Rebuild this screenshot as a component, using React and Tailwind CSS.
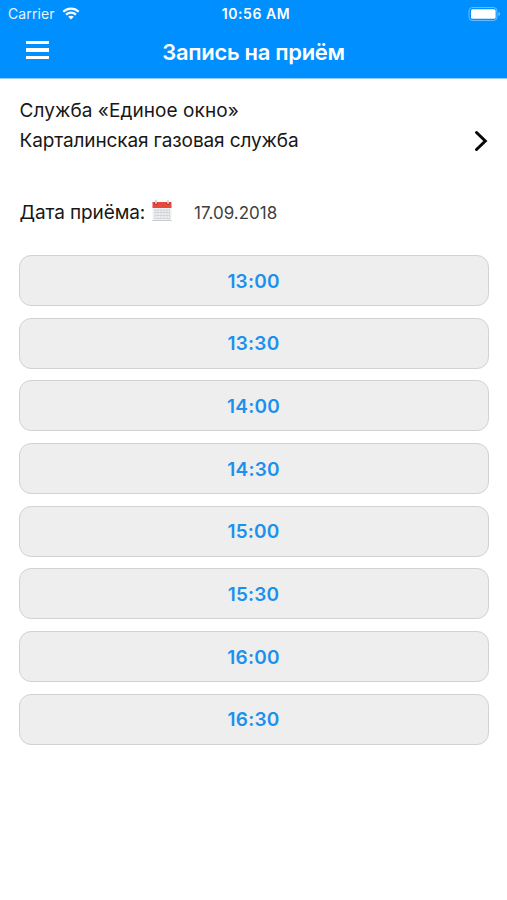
const slots = ["13:00", "13:30", "14:00", "14:30", "15:00", "15:30", "16:00", "16:30"];

function StatusBar() {
  return (
    <div className="flex h-[28px] items-center justify-between pl-[8px] pr-[6px] text-[14px] leading-none">
      <div className="flex w-[100px] items-center gap-[7px]">
        <span className="tracking-[0.1px] opacity-90">Carrier</span>
        <svg className="mb-[1px] h-[13px] w-[18px]" viewBox="0 0 18 13" fill="none" stroke="white" strokeWidth="2.2">
          <path d="M1.3 4.7C5.6.6 12.4.6 16.7 4.7" />
          <path d="M4.1 7.6c2.8-2.6 7-2.6 9.8 0" />
          <path d="M6.2 9.7c1.6-1.4 4-1.4 5.6 0L9 12.5Z" fill="white" stroke="none" />
        </svg>
      </div>
      <span className="pl-[3px] font-semibold tracking-[0.55px]">10:56 AM</span>
      <div className="flex w-[100px] justify-end">
        <svg className="mb-[1px] h-[14px] w-[33px]" viewBox="0 0 33 14">
          <rect x="1" y="0.5" width="28" height="13" rx="3.5" fill="none" stroke="white" strokeOpacity="0.4" />
          <rect x="3" y="2.2" width="24.6" height="9.6" rx="1.5" fill="white" />
          <path d="M30.5 5c2 .7 2 3.300 0 4Z" fill="white" fillOpacity="0.5" />
        </svg>
      </div>
    </div>
  );
}

function Calendar() {
  return (
    <svg className="mb-[6px] ml-[7px] h-[23px] w-[20px]" viewBox="0 0 20 23">
      <rect x="0.5" y="3" width="19" height="19" rx="0.8" fill="#f0f1f3" />
      <path d="M.5 21.500h19" stroke="#c8cacd" />
      <path d="M.5 3h19v6H.5Z" fill="#e9483d" />
      <path d="M2.500 11h15M2.500 13.500h15M2.500 16.500h15M2.500 19.500h15M3 10.500v9.500M6 10.500v9.500M9 10.500v9.500M12 10.500v9.500M15 10.500v9.500M17.500 10.500v9.500" stroke="#cbd0d6" strokeWidth="0.8" />
      <circle cx="4" cy="4.200" r="1.600" fill="#ab332f" />
      <circle cx="16" cy="4.200" r="1.600" fill="#ab332f" />
      <path d="M4 1.500v2.500M16 1.500v2.500" stroke="#d7d4d4" strokeWidth="1.800" strokeLinecap="round" />
    </svg>
  );
}

export default function App() {
  return (
    <div className="flex h-[900px] w-[507px] flex-col overflow-hidden bg-white font-['Inter','Liberation_Sans',sans-serif] text-[#171717]">
      <header className="h-[79px] border-b border-[#8bcbff] bg-[#008fff] text-white">
        <StatusBar />
        <div className="flex h-[48px] items-center justify-between px-[26px]">
          <button className="flex w-[23px] flex-col gap-[4px] pb-[4px]" aria-label="Меню">
            <span className="h-[3.5px] w-full bg-white" />
            <span className="h-[3.5px] w-full bg-white" />
            <span className="h-[3.5px] w-full bg-white" />
          </button>
          <h1 className="text-[22px] leading-none font-semibold tracking-[-0.32px] whitespace-nowrap">Запись на приём</h1>
          <span className="w-[23px]" />
        </div>
      </header>
      <main className="px-[19px] pt-[16px]">
        <div className="flex h-[61px] items-center justify-between">
          <div className="pl-[0.5px] text-[19px] leading-[30px] whitespace-nowrap">
            <p className="tracking-[0.07px]">Служба «Единое окно»</p>
            <p className="tracking-[-0.12px]">Карталинская газовая служба</p>
          </div>
          <svg className="mt-[31px] h-[22px] w-[14px]" viewBox="0 0 14 22" fill="none" stroke="#080808" strokeWidth="3">
            <path d="m2.500 2.500 8.800 8.500-8.800 8.500" strokeLinecap="round" />
          </svg>
        </div>
        <div className="mt-[42px] flex h-[31px] items-center whitespace-nowrap">
          <span className="pl-[0.5px] text-[19px] tracking-[-0.12px]">Дата приёма:</span>
          <Calendar />
          <span className="ml-[22px] text-[17px] text-[#3f3f3f]">17.09.2018</span>
        </div>
        <div className="mt-[26px] flex flex-col gap-[11.7px]">
          {slots.map((time) => (
            <button key={time} className="h-[51px] w-[470px] shrink-0 rounded-[12px] border-[1.5px] border-[#d2d2d2] bg-[#eeeeee] pt-[1px] pr-[1px] text-[19px] leading-none font-semibold tracking-[0.2px] text-[#1b91ee]">
              {time}
            </button>
          ))}
        </div>
      </main>
    </div>
  );
}
